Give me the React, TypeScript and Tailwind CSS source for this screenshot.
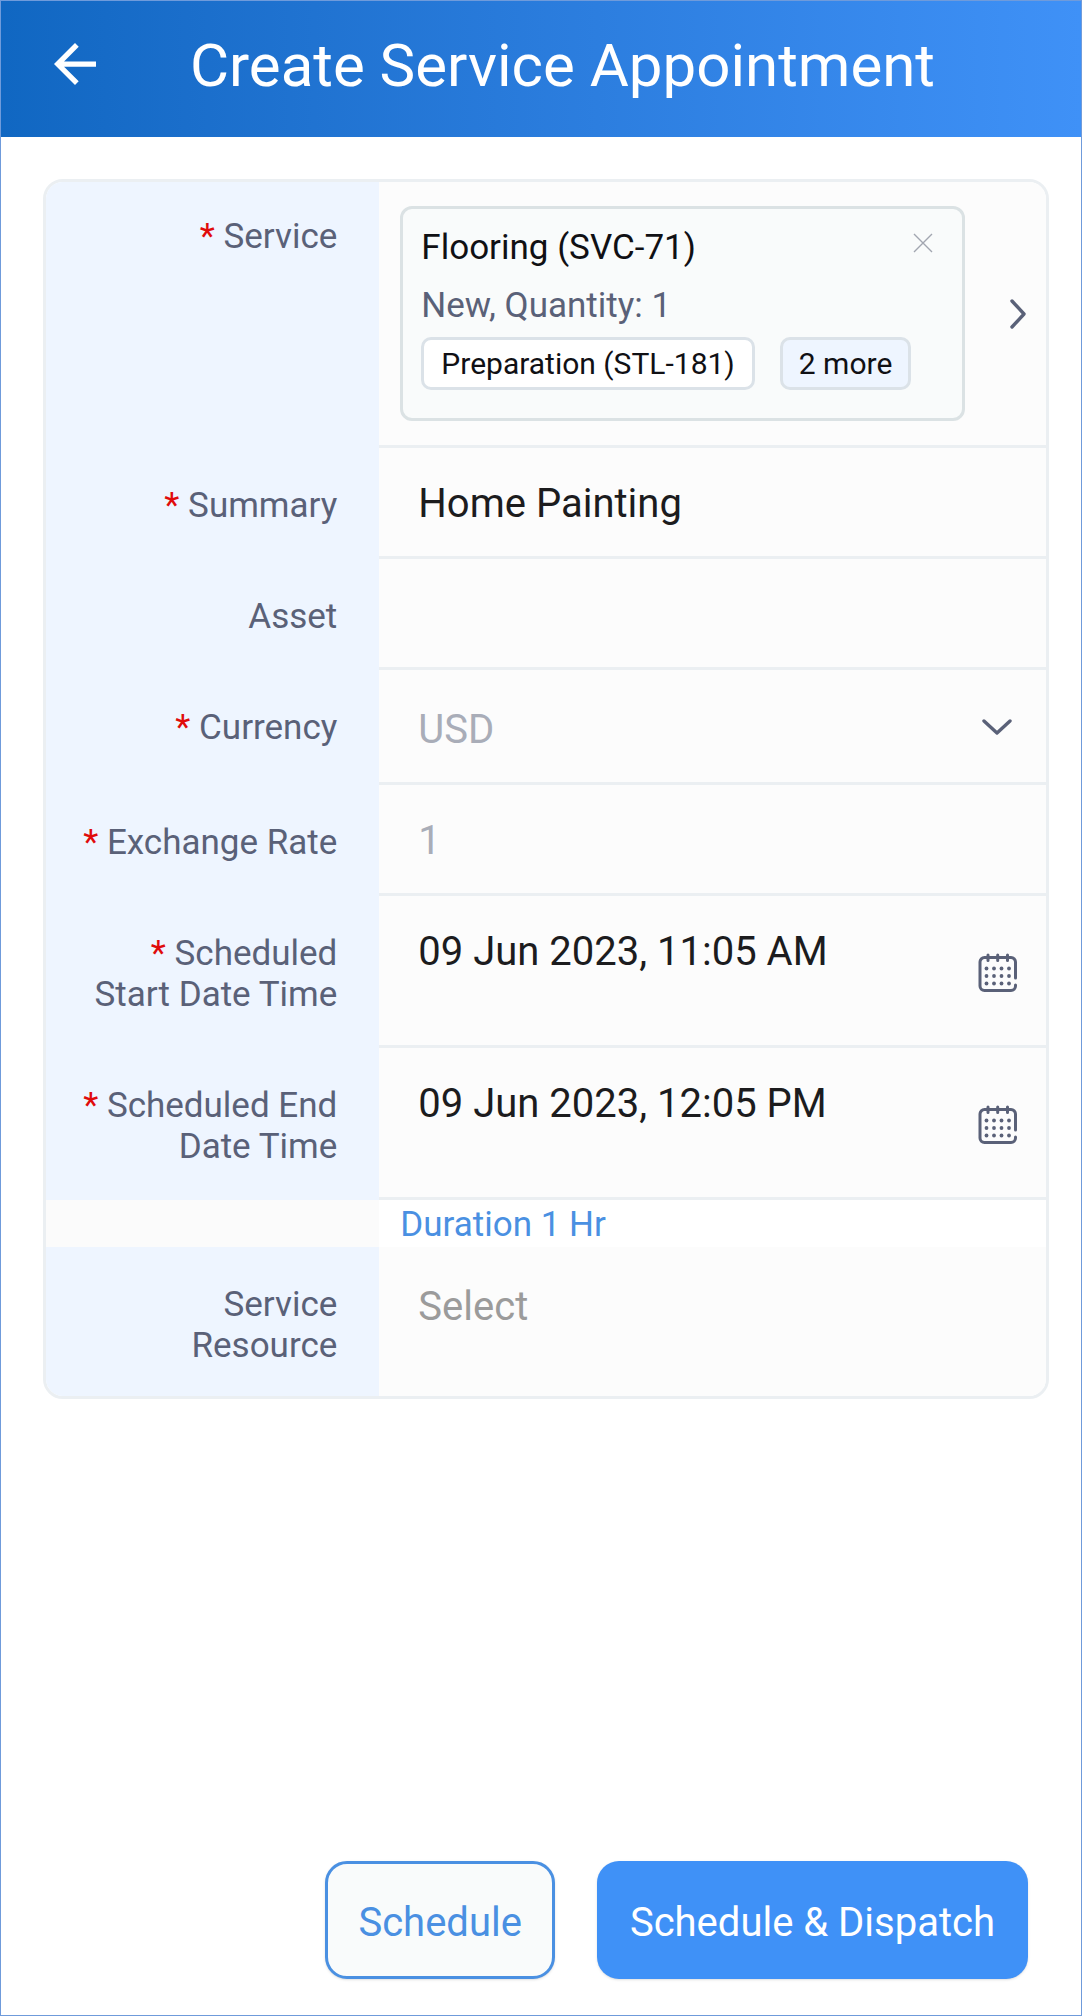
import { useState } from "react";
import type { ReactNode } from "react";
import { clsx } from "clsx";

interface FieldRowProps {
  label: string;
  htmlFor?: string;
  required?: boolean;
  tall?: boolean;
  last?: boolean;
  children?: ReactNode;
}

const inputClass =
  "block w-full min-w-0 flex-1 bg-transparent pl-[39px] pr-4 text-[40px] leading-[47px] text-[#1c1c1e] outline-none placeholder:text-[#9b9b9b]";

function ArrowLeftIcon() {
  return (
    <svg width="42" height="42" viewBox="4 4 16 16" fill="currentColor" aria-hidden="true">
      <path d="M20 11H7.83l5.59-5.59L12 4l-8 8 8 8 1.41-1.41L7.83 13H20v-2z" />
    </svg>
  );
}

function CloseIcon() {
  return (
    <svg width="20" height="20" viewBox="0 0 20 20" fill="none" stroke="currentColor" strokeWidth="1.4" aria-hidden="true">
      <path d="M1 1l18 18M19 1L1 19" />
    </svg>
  );
}

function ChevronRightIcon() {
  return (
    <svg width="16" height="30" viewBox="0 0 16 30" fill="none" stroke="currentColor" strokeWidth="3.4" strokeLinecap="round" strokeLinejoin="round" aria-hidden="true">
      <path d="M2 2l12 13L2 28" />
    </svg>
  );
}

function ChevronDownIcon() {
  return (
    <svg width="30" height="16" viewBox="0 0 30 16" fill="none" stroke="currentColor" strokeWidth="3.4" strokeLinecap="round" strokeLinejoin="round" aria-hidden="true">
      <path d="M2 2l13 12L28 2" />
    </svg>
  );
}

function CalendarIcon() {
  const dots = [15.5, 23, 30.5].flatMap((y) => [8.5, 16, 23.5, 31].map((x) => ({ x, y })));
  return (
    <svg width="40" height="40" viewBox="0 0 40 40" fill="none" stroke="currentColor" strokeWidth="3" strokeLinecap="round" aria-hidden="true">
      <path d="M37.5 25V9A4.5 4.5 0 0 0 33 4.5H6.5A4.5 4.5 0 0 0 2 9v24a4.5 4.5 0 0 0 4.5 4.5H33a4.5 4.5 0 0 0 4.5-4.5v-1" />
      <path d="M10 2v5.5M19.7 2v5.5M29.5 2v5.5" />
      {dots.map(({ x, y }) => (
        <circle key={`${x}-${y}`} cx={x} cy={y} r="1.9" fill="currentColor" stroke="none" />
      ))}
    </svg>
  );
}

function FieldRow({ label, htmlFor, required, tall, last, children }: FieldRowProps) {
  return (
    <div className="flex">
      <label
        htmlFor={htmlFor}
        className={clsx(
          "w-1/3 shrink-0 bg-[#eef5ff] pr-[42px] pb-6 pl-7 text-right text-[35px] leading-[41px] text-[#5a6178]",
          tall ? "pt-[34px]" : "pt-[37px]"
        )}
      >
        {required && <span className="text-[#e00b0b]">* </span>}
        {label}
      </label>
      <div className={clsx("flex min-w-0 flex-1 bg-[#fcfcfc]", !last && "border-b-[3px] border-[#ebeff2]")}>
        {children}
      </div>
    </div>
  );
}

interface DateFieldProps {
  id: string;
  label: string;
  value: string;
  onChange: (value: string) => void;
}

function DateField({ id, label, value, onChange }: DateFieldProps) {
  return (
    <FieldRow label={label} htmlFor={id} required>
      <div className="flex flex-1 items-center pr-7">
        <input
          id={id}
          type="text"
          className={`${inputClass} pt-8 pb-[70px]`}
          value={value}
          onChange={(e) => onChange(e.target.value)}
        />
        <button type="button" aria-label={`Pick ${label}`} className="mt-1 text-[#5a6178]">
          <CalendarIcon />
        </button>
      </div>
    </FieldRow>
  );
}

function ServiceCard({ onRemove }: { onRemove: () => void }) {
  return (
    <div className="min-w-0 flex-1 rounded-xl border-[3px] border-[#dbe2e4] bg-[#f9fbfb] px-[18px] pt-3 pb-7">
      <div className="flex items-start justify-between pr-[11px]">
        <p className="text-[35px] leading-[54px] text-[#101014]">Flooring (SVC-71)</p>
        <button type="button" aria-label="Remove service" className="mt-3 text-[#a2a6b0]" onClick={onRemove}>
          <CloseIcon />
        </button>
      </div>
      <p className="text-[35px] leading-[62px] text-[#5a6178]">New, Quantity: 1</p>
      <div className="flex gap-[25px] text-[30px] leading-[47px] text-[#101014]">
        <span className="rounded-[10px] border-[3px] border-[#dbe2e8] bg-white px-[17px]">Preparation (STL-181)</span>
        <button type="button" className="rounded-[10px] border-[3px] border-[#dbe2e8] bg-[#eef5ff] px-4">
          2 more
        </button>
      </div>
    </div>
  );
}

export default function App() {
  const [hasService, setHasService] = useState(true);
  const [summary, setSummary] = useState("Home Painting");
  const [asset, setAsset] = useState("");
  const [start, setStart] = useState("09 Jun 2023, 11:05 AM");
  const [end, setEnd] = useState("09 Jun 2023, 12:05 PM");

  return (
    <div className="flex min-h-screen flex-col border border-[#6f9bdb] bg-white font-['Roboto',sans-serif]">
      <header className="flex h-[136px] items-center bg-linear-to-r from-[#1067c2] to-[#3f91f7] pb-[10px] pl-[53px] text-white">
        <button type="button" aria-label="Back">
          <ArrowLeftIcon />
        </button>
        <h1 className="ml-[94px] pt-1 text-[60px] leading-[68px]">Create Service Appointment</h1>
      </header>

      <form className="flex flex-1 flex-col" onSubmit={(e) => e.preventDefault()}>
        <div className="mt-[42px] mr-8 ml-[42px] overflow-hidden rounded-[20px] border-[3px] border-[#ebeff2]">
          <FieldRow label="Service" required tall>
            <div className="flex flex-1 items-center gap-[45px] py-6 pr-5 pl-[21px]">
              {hasService ? <ServiceCard onRemove={() => setHasService(false)} /> : <div className="flex-1" />}
              <button type="button" aria-label="Choose service" className="text-[#5a6178]">
                <ChevronRightIcon />
              </button>
            </div>
          </FieldRow>

          <FieldRow label="Summary" htmlFor="summary" required>
            <input
              id="summary"
              type="text"
              className={`${inputClass} pt-8 pb-[29px]`}
              value={summary}
              onChange={(e) => setSummary(e.target.value)}
            />
          </FieldRow>

          <FieldRow label="Asset" htmlFor="asset">
            <input
              id="asset"
              type="text"
              className={`${inputClass} pt-8 pb-[29px]`}
              value={asset}
              onChange={(e) => setAsset(e.target.value)}
            />
          </FieldRow>

          <FieldRow label="Currency" htmlFor="currency" required>
            <div className="grid flex-1 items-center">
              <select
                id="currency"
                defaultValue="USD"
                className="col-start-1 row-start-1 w-full appearance-none bg-transparent pt-9 pb-[29px] pl-[39px] text-[40px] leading-[47px] text-[#a9adb8] outline-none"
              >
                <option>USD</option>
                <option>EUR</option>
              </select>
              <span className="pointer-events-none col-start-1 row-start-1 justify-self-end pt-0.5 pr-[34px] text-[#5a6178]">
                <ChevronDownIcon />
              </span>
            </div>
          </FieldRow>

          <FieldRow label="Exchange Rate" htmlFor="rate" required>
            <input
              id="rate"
              type="text"
              readOnly
              className="w-full min-w-0 bg-transparent pt-8 pb-[29px] pl-[39px] text-[40px] leading-[47px] text-[#a9adb8] outline-none"
              value="1"
            />
          </FieldRow>

          <DateField id="start" label="Scheduled Start Date Time" value={start} onChange={setStart} />
          <DateField id="end" label="Scheduled End Date Time" value={end} onChange={setEnd} />

          <div className="flex">
            <div className="w-1/3 shrink-0 bg-[#fbfbfb]" />
            <p className="pt-0.5 pl-[21px] text-[35px] leading-[45px] text-[#4a90e2]">Duration 1 Hr</p>
          </div>

          <FieldRow label="Service Resource" htmlFor="resource" last>
            <input id="resource" type="text" placeholder="Select" className={`${inputClass} pt-9 pb-[66px]`} />
          </FieldRow>
        </div>

        <div className="mt-auto flex justify-end gap-[42px] pr-[53px] pb-9">
          <button
            type="button"
            className="rounded-[22px] border-[3px] border-[#4a90e2] bg-[#f9fbfb] px-[30px] pt-[35px] pb-[29px] text-[40px] leading-[48px] text-[#4a90e2] shadow-sm"
          >
            Schedule
          </button>
          <button
            type="submit"
            className="rounded-[22px] bg-[#3f91f7] px-[33px] pt-[38px] pb-8 text-[40px] leading-[48px] text-white shadow-sm"
          >
            Schedule &amp; Dispatch
          </button>
        </div>
      </form>
    </div>
  );
}
